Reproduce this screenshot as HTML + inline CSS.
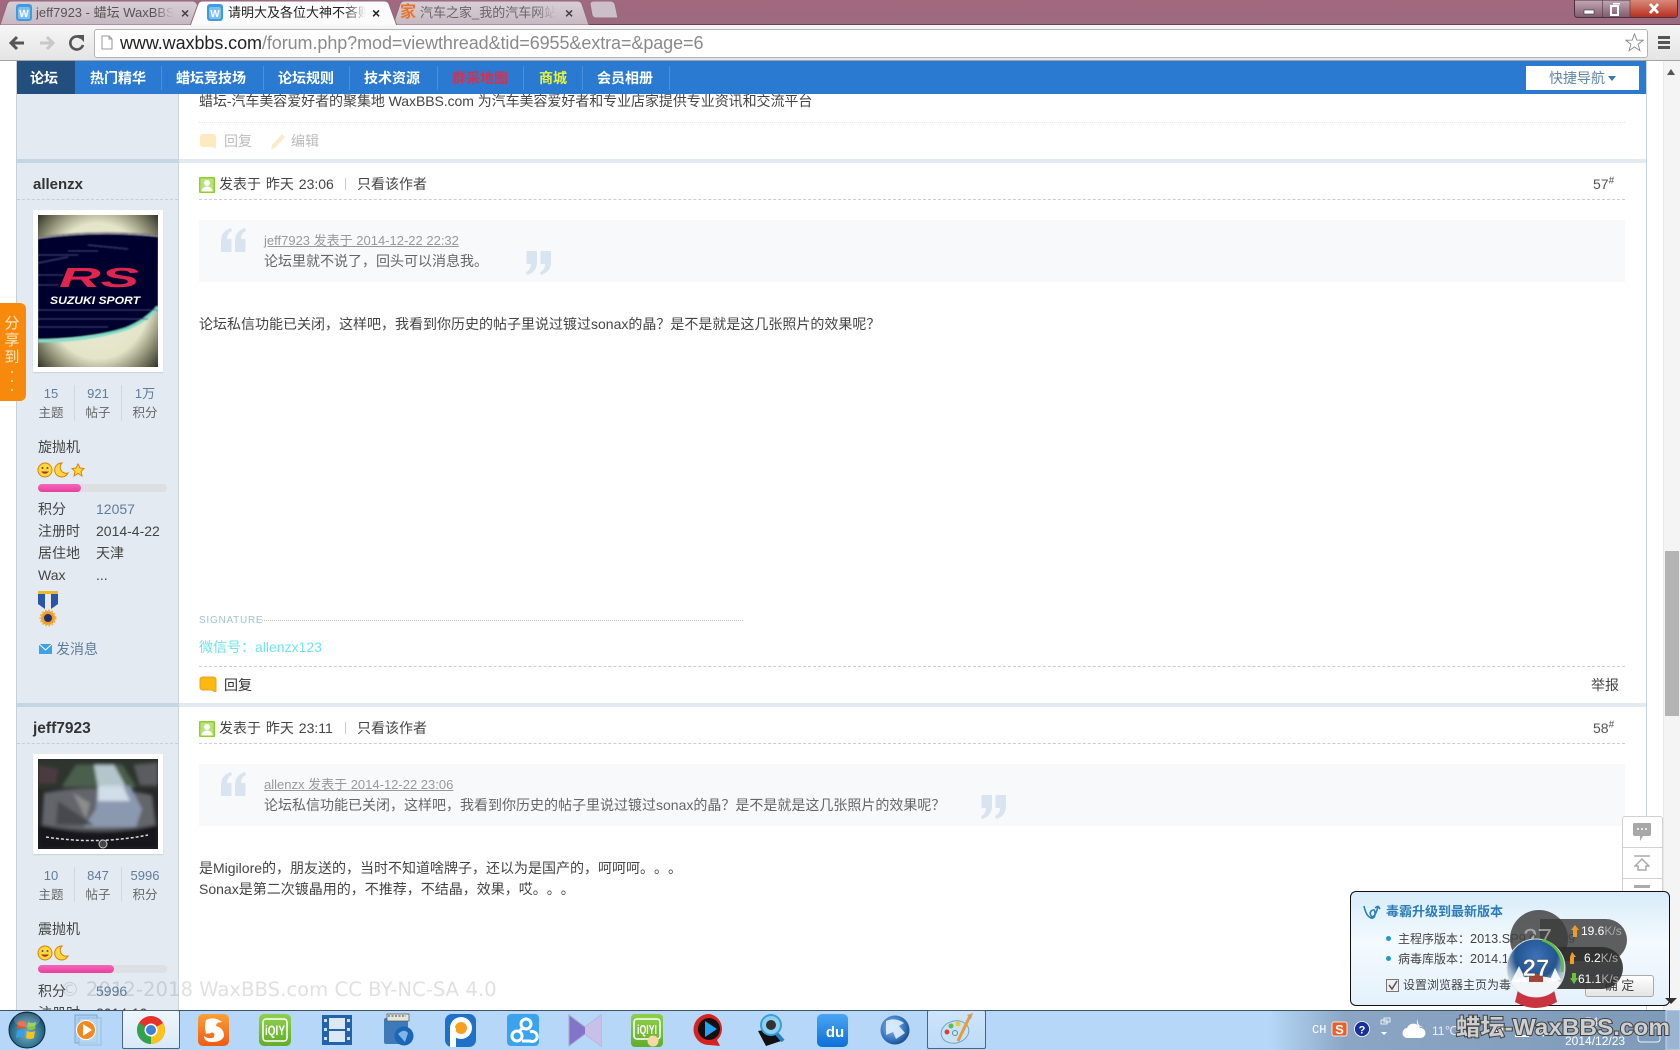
<!DOCTYPE html>
<html lang="zh"><head><meta charset="utf-8"><title>WaxBBS</title>
<style>
html,body{margin:0;padding:0;width:1680px;height:1050px;overflow:hidden;background:#fff}
body{position:relative;font-family:"Liberation Sans","Noto Sans CJK SC",sans-serif;font-size:14px;color:#444;text-spacing-trim:space-all}
.a{position:absolute}
.t{position:absolute;white-space:nowrap;line-height:20px;height:20px}
.nav{position:absolute;top:67px;line-height:22px;font-size:14px;font-weight:bold;color:#fff;white-space:nowrap}
.ns{position:absolute;top:66px;height:24px;width:1px;background:#4a90dc}
.dash{position:absolute;height:0;border-top:1px dashed #cdcdcd}
.c{position:absolute;text-align:center;white-space:nowrap;line-height:20px;height:20px;color:#666}
.c.n{color:#5f7d9c;font-size:13px}
.sv{position:absolute;width:1px;background:#cfd9e2}
.tab{position:absolute;white-space:nowrap;overflow:hidden;font-size:13px;line-height:20px;height:20px;top:3px;-webkit-mask-image:linear-gradient(90deg,#000 85%,transparent);mask-image:linear-gradient(90deg,#000 85%,transparent)}
.tx{position:absolute;top:4px;font-size:14px;line-height:18px;color:#444;font-weight:bold}
</style></head><body>

<svg width="0" height="0" style="position:absolute"><defs>
<path id="qo" d="M1 24V13Q1 3 11 0L12 3Q7 5 7 11H11.500V24ZM15 24V13Q15 3 25 0L26 3Q21 5 21 11H25.500V24Z"/>
<g id="rep"><path d="M4 1H14Q17 1 17 4V15Q17 16 15.500 15.500L13 14H4Q1 14 1 11V4Q1 1 4 1Z"/></g>
</defs></svg>

<!-- page -->
<div class="a" style="left:17px;top:61px;width:161px;height:950px;background:#e3eaf1;border-right:1px solid #c9d6e2"></div>
<div class="a" style="left:16px;top:61px;width:1px;height:950px;background:#c6d0da"></div>
<div class="a" style="left:1646px;top:61px;width:1px;height:950px;background:#c8d2dc"></div>
<div class="a" style="left:17px;top:159px;width:161px;height:4px;background:#c5d6e3"></div>
<div class="a" style="left:179px;top:159px;width:1467px;height:4px;background:#e3eaf1"></div>
<div class="a" style="left:17px;top:703px;width:161px;height:4px;background:#c5d6e3"></div>
<div class="a" style="left:179px;top:703px;width:1467px;height:4px;background:#e3eaf1"></div>

<!-- scrollbar -->
<div class="a" style="left:1663px;top:61px;width:17px;height:950px;background:#f4f4f4;border-left:1px solid #e8e8e8"></div>
<div class="a" style="left:1665px;top:551px;width:14px;height:165px;background:#b4b4b4"></div>
<svg class="a" style="left:1666px;top:68px" width="10" height="8"><path d="M5 1L9 7H1Z" fill="#555"/></svg>

<!-- top post remainder -->
<div class="t" style="left:199px;top:91px;color:#444;letter-spacing:-.06px">蜡坛-汽车美容爱好者的聚集地 WaxBBS.com 为汽车美容爱好者和专业店家提供专业资讯和交流平台</div>
<div class="a" style="left:199px;top:122px;width:1426px;border-top:1px dotted #e8e8e8"></div>
<svg class="a" style="left:199px;top:133px;opacity:.3" width="18" height="17" fill="#fbc02d"><use href="#rep"/></svg>
<div class="t" style="left:224px;top:131px;color:#bbb">回复</div>
<svg class="a" style="left:270px;top:133px;opacity:.35" width="16" height="17"><path d="M12 1L15 4L5 15L1 16L2 12Z" fill="#f3c76a"/></svg>
<div class="t" style="left:291px;top:131px;color:#bbb">编辑</div>

<!-- nav -->
<div class="a" style="left:17px;top:61px;width:1629px;height:33px;background:#2a7ad2"></div>
<div class="a" style="left:17px;top:61px;width:58px;height:33px;background:#234f7e"></div>
<div class="nav" style="left:30px">论坛</div>
<div class="nav" style="left:90px">热门精华</div><div class="ns" style="left:161px"></div>
<div class="nav" style="left:176px">蜡坛竞技场</div><div class="ns" style="left:263px"></div>
<div class="nav" style="left:278px">论坛规则</div><div class="ns" style="left:349px"></div>
<div class="nav" style="left:364px">技术资源</div><div class="ns" style="left:437px"></div>
<div class="nav" style="left:452px;color:#d8304a">群采地图</div><div class="ns" style="left:523px"></div>
<div class="nav" style="left:539px;color:#e6f53a">商城</div><div class="ns" style="left:582px"></div>
<div class="nav" style="left:597px">会员相册</div><div class="ns" style="left:669px"></div>
<div class="a" style="left:1526px;top:66px;width:113px;height:24px;background:#fff"></div>
<div class="t" style="left:1549px;top:68px;color:#5e86a8">快捷导航</div>
<svg class="a" style="left:1608px;top:76px" width="8" height="6"><path d="M0 0H8L4 5Z" fill="#3e76a8"/></svg>

<!-- post 1 sidebar -->
<div class="t" style="left:33px;top:175px;font-weight:bold;font-size:15px;color:#333">allenzx</div>
<div class="dash" style="left:17px;top:199px;width:161px"></div>
<div class="a" style="left:33px;top:210px;width:130px;height:162px;background:#fff;box-shadow:0 1px 1px #c8d0d8"></div>
<svg class="a" style="left:38px;top:215px" width="120" height="152" viewBox="0 0 120 152">
<defs>
<radialGradient id="av1" cx=".5" cy=".5" r=".72"><stop offset="0" stop-color="#f0efdc"/><stop offset=".62" stop-color="#e4e4c8"/><stop offset=".8" stop-color="#8c8c72"/><stop offset="1" stop-color="#2a2a20"/></radialGradient>
<filter id="bl1"><feGaussianBlur stdDeviation=".8"/></filter>
</defs>
<rect width="120" height="152" fill="url(#av1)"/>
<g filter="url(#bl1)">
<path d="M0 22Q60 14 120 20V92Q105 108 85 114Q45 124 0 124Z" fill="#06062f"/>
<path d="M0 23Q60 15 120 21" stroke="#fff" stroke-opacity=".7" fill="none"/>
<path d="M0 126Q50 126 88 114Q108 106 120 92" stroke="#7fe0cc" stroke-width="3" fill="none"/>
<g stroke="#44447e" stroke-width=".7" fill="none"><path d="M0 40H40M0 48L30 42M0 60H25M0 70H20M0 95H120M0 104H110M0 112H70M50 30L90 34M30 36L60 36"/></g>
</g>
<text x="61" y="72" text-anchor="middle" font-family="Liberation Sans" font-style="italic" font-weight="bold" font-size="28" fill="#e0264f" textLength="80" lengthAdjust="spacingAndGlyphs">RS</text>
<text x="57" y="89" text-anchor="middle" font-family="Liberation Sans" font-style="italic" font-weight="bold" font-size="11" fill="#fff" textLength="90" lengthAdjust="spacingAndGlyphs">SUZUKI SPORT</text>
</svg>
<div class="c n" style="left:28px;width:46px;top:384px">15</div><div class="c" style="left:28px;width:46px;top:403px;font-size:12.5px">主题</div>
<div class="sv" style="left:74px;top:385px;height:36px"></div>
<div class="c n" style="left:75px;width:46px;top:384px">921</div><div class="c" style="left:75px;width:46px;top:403px;font-size:12.5px">帖子</div>
<div class="sv" style="left:121px;top:385px;height:36px"></div>
<div class="c n" style="left:122px;width:46px;top:384px">1万</div><div class="c" style="left:122px;width:46px;top:403px;font-size:12.5px">积分</div>
<div class="t" style="left:38px;top:437px">旋抛机</div>
<svg class="a" style="left:37px;top:461px" width="50" height="18" viewBox="0 0 50 18">
<circle cx="8" cy="9" r="7" fill="#ffd93b" stroke="#d9800f"/><circle cx="5.5" cy="7" r="1" fill="#553"/><circle cx="10.5" cy="7" r="1" fill="#553"/><path d="M4 10.5Q8 15 12 10.5Z" fill="#a33"/>
<path d="M25 2A7 7 0 1 0 31 12A6 6 0 0 1 25 2Z" fill="#ffd93b" stroke="#d9800f"/>
<path d="M41 3L43 7L47 7.5L44 10.5L45 15L41 12.5L37 15L38 10.5L35 7.5L39 7Z" fill="#ffd93b" stroke="#d9800f"/>
</svg>
<div class="a" style="left:38px;top:484px;width:129px;height:8px;background:#dcdfe3;border-radius:4px"></div>
<div class="a" style="left:38px;top:484px;width:43px;height:8px;background:linear-gradient(#f468bc,#e83f9b);border-radius:4px"></div>
<div class="t" style="left:38px;top:499px">积分</div><div class="t" style="left:96px;top:499px;color:#5f7d9c">12057</div>
<div class="t" style="left:38px;top:521px">注册时</div><div class="t" style="left:96px;top:521px">2014-4-22</div>
<div class="t" style="left:38px;top:543px">居住地</div><div class="t" style="left:96px;top:543px">天津</div>
<div class="t" style="left:38px;top:565px">Wax</div><div class="t" style="left:96px;top:565px">...</div>
<svg class="a" style="left:38px;top:591px" width="20" height="37" viewBox="0 0 20 37">
<rect width="20" height="3" fill="#e8b830"/><path d="M0 3H20V13L13 18H7L0 13Z" fill="#2b55a8"/><rect x="7" y="3" width="6" height="15" fill="#e8e8e8"/>
<circle cx="10" cy="27" r="7" fill="#f29a1f" stroke="#f0b040" stroke-width="3" stroke-dasharray="1.500 1.500"/><circle cx="10" cy="27" r="4" fill="#1d2f7a"/>
</svg>
<svg class="a" style="left:39px;top:644px" width="13" height="10" viewBox="0 0 13 10"><rect width="13" height="10" fill="#3fa2e6"/><path d="M0 0L6.5 6L13 0" stroke="#fff" fill="none"/></svg>
<div class="t" style="left:56px;top:639px;color:#5f7d9c">发消息</div>

<!-- post 1 main -->
<svg class="a" style="left:199px;top:177px" width="16" height="16"><use href="#uic"/></svg>
<div class="t" style="left:219px;top:174px;word-spacing:1px">发表于 昨天 23:06</div>
<div class="a" style="left:345px;top:178px;width:1px;height:12px;background:#ccc"></div>
<div class="t" style="left:357px;top:174px">只看该作者</div>
<div class="t" style="left:1593px;top:174px;color:#555">57<sup style="font-size:10px;line-height:0">#</sup></div>
<div class="dash" style="left:199px;top:199px;width:1426px"></div>
<div class="a" style="left:199px;top:220px;width:1426px;height:62px;background:#f7f9fa"></div>
<svg class="a" style="left:220px;top:228px" width="26" height="24" fill="#d8e5f0"><use href="#qo"/></svg>
<div class="t" style="left:264px;top:231px;color:#999;text-decoration:underline;font-size:13px">jeff7923 发表于 2014-12-22 22:32</div>
<div class="t" style="left:264px;top:251px;color:#666">论坛里就不说了，回头可以消息我。</div>
<svg class="a" style="left:526px;top:251px;transform:rotate(180deg)" width="26" height="24" fill="#d8e5f0"><use href="#qo"/></svg>
<div class="t" style="left:199px;top:314px">论坛私信功能已关闭，这样吧，我看到你历史的帖子里说过镀过sonax的晶？是不是就是这几张照片的效果呢？</div>
<div class="t" style="left:199px;top:611px;font-size:10px;color:#9cc4cc;letter-spacing:.75px">SIGNATURE</div>
<div class="a" style="left:262px;top:620px;width:481px;border-top:1px dotted #c4c4c4"></div>
<div class="t" style="left:199px;top:637px;color:#6fe3ea">微信号：allenzx123</div>
<div class="dash" style="left:199px;top:666px;width:1426px"></div>
<svg class="a" style="left:199px;top:676px" width="18" height="17" fill="#fbb80f" stroke="#e8a12c"><use href="#rep"/></svg>
<div class="t" style="left:224px;top:675px;color:#333">回复</div>
<div class="t" style="left:1591px;top:675px;color:#444">举报</div>

<!-- post 2 sidebar -->
<div class="t" style="left:33px;top:719px;font-weight:bold;font-size:15.5px;color:#333">jeff7923</div>
<div class="dash" style="left:17px;top:743px;width:161px"></div>
<div class="a" style="left:33px;top:754px;width:130px;height:100px;background:#fff;box-shadow:0 1px 1px #c8d0d8"></div>
<svg class="a" style="left:38px;top:759px" width="120" height="90" viewBox="0 0 120 90">
<defs>
<filter id="bl2"><feGaussianBlur stdDeviation="1.500"/></filter>
<clipPath id="cp2"><rect width="120" height="90"/></clipPath>
</defs>
<rect width="120" height="90" fill="#26282a"/>
<g filter="url(#bl2)" clip-path="url(#cp2)">
<path d="M0 0H120V30H0Z" fill="#2f342e"/>
<path d="M0 6L20 10L18 24H0Z" fill="#4b3a40"/><path d="M96 6L120 4V26H102Z" fill="#5a5c60"/>
<path d="M24 28L38 6H84L98 28Z" fill="#4c5f4e"/><path d="M56 6H76L88 28H60Z" fill="#b4c6cc"/>
<path d="M6 34Q60 24 114 36L118 66Q60 78 4 66Z" fill="#62656b"/>
<path d="M60 27H92L104 50L98 68H46L58 50Z" fill="#8a99b0"/>
<path d="M60 27H85L92 42H60Z" fill="#d0dce8"/>
<path d="M20 42L56 66H18Z" fill="#46494f"/><path d="M35 34L52 44L48 60Z" fill="#8a8c8e"/>
<path d="M0 66Q60 82 120 66V90H0Z" fill="#17181a"/>
</g>
<path d="M8 78Q60 86 110 76" stroke="#d8d8d8" stroke-width="1.500" fill="none" stroke-dasharray="3 2"/>
<circle cx="65" cy="85" r="4" fill="#444" stroke="#ccc"/>
</svg>
<div class="c n" style="left:28px;width:46px;top:866px">10</div><div class="c" style="left:28px;width:46px;top:885px;font-size:12.5px">主题</div>
<div class="sv" style="left:74px;top:867px;height:35px"></div>
<div class="c n" style="left:75px;width:46px;top:866px">847</div><div class="c" style="left:75px;width:46px;top:885px;font-size:12.5px">帖子</div>
<div class="sv" style="left:121px;top:867px;height:35px"></div>
<div class="c n" style="left:122px;width:46px;top:866px">5996</div><div class="c" style="left:122px;width:46px;top:885px;font-size:12.5px">积分</div>
<div class="t" style="left:38px;top:919px">震抛机</div>
<svg class="a" style="left:37px;top:944px" width="34" height="18" viewBox="0 0 34 18">
<circle cx="8" cy="9" r="7" fill="#ffd93b" stroke="#d9800f"/><circle cx="5.5" cy="7" r="1" fill="#553"/><circle cx="10.5" cy="7" r="1" fill="#553"/><path d="M4 10.5Q8 15 12 10.5Z" fill="#a33"/>
<path d="M25 2A7 7 0 1 0 31 12A6 6 0 0 1 25 2Z" fill="#ffd93b" stroke="#d9800f"/>
</svg>
<div class="a" style="left:38px;top:965px;width:129px;height:8px;background:#dcdfe3;border-radius:4px"></div>
<div class="a" style="left:38px;top:965px;width:76px;height:8px;background:linear-gradient(#f468bc,#e83f9b);border-radius:4px"></div>
<div class="t" style="left:38px;top:981px">积分</div><div class="t" style="left:96px;top:981px;color:#5f7d9c">5996</div>
<div class="t" style="left:38px;top:1003px">注册时</div><div class="t" style="left:96px;top:1003px">2014-10</div>

<!-- post 2 main -->
<svg class="a" style="left:199px;top:721px" width="16" height="16" viewBox="0 0 16 16">
<g id="uic"><rect width="16" height="16" rx="1" fill="#8fcf2e"/><rect x="1.500" y="1.500" width="13" height="13" fill="#b9e27a"/><circle cx="8" cy="6" r="3" fill="#fff"/><path d="M2.500 14.500Q3 9.500 8 9.500T13.500 14.500Z" fill="#fff"/></g></svg>
<div class="t" style="left:219px;top:718px;word-spacing:1px">发表于 昨天 23:11</div>
<div class="a" style="left:345px;top:722px;width:1px;height:12px;background:#ccc"></div>
<div class="t" style="left:357px;top:718px">只看该作者</div>
<div class="t" style="left:1593px;top:718px;color:#555">58<sup style="font-size:10px;line-height:0">#</sup></div>
<div class="dash" style="left:199px;top:743px;width:1426px"></div>
<div class="a" style="left:199px;top:764px;width:1426px;height:62px;background:#f7f9fa"></div>
<svg class="a" style="left:220px;top:772px" width="26" height="24" fill="#d8e5f0"><use href="#qo"/></svg>
<div class="t" style="left:264px;top:775px;color:#999;text-decoration:underline;font-size:13px">allenzx 发表于 2014-12-22 23:06</div>
<div class="t" style="left:264px;top:795px;color:#666">论坛私信功能已关闭，这样吧，我看到你历史的帖子里说过镀过sonax的晶？是不是就是这几张照片的效果呢？</div>
<svg class="a" style="left:981px;top:795px;transform:rotate(180deg)" width="26" height="24" fill="#d8e5f0"><use href="#qo"/></svg>
<div class="t" style="left:199px;top:858px">是Migilore的，朋友送的，当时不知道啥牌子，还以为是国产的，呵呵呵。。。</div>
<div class="t" style="left:199px;top:879px">Sonax是第二次镀晶用的，不推荐，不结晶，效果，哎。。。</div>

<!-- share -->
<div class="a" style="left:0;top:303px;width:26px;height:98px;background:#f78a0c;border-radius:0 6px 6px 0"></div>
<div class="a" style="left:3px;top:315px;width:18px;font-size:15px;line-height:17px;color:#ffe9cc;text-align:center">分<br>享<br>到</div>
<div class="a" style="left:11px;top:371px;width:2px;height:2px;background:#ffd9a8;box-shadow:0 9px 0 #ffd9a8,0 18px 0 #ffd9a8"></div>

<!-- float tools -->
<div class="a" style="left:1622px;top:816px;width:39px;height:100px;background:#fff;border:1px solid #d0d0d0;border-radius:3px 3px 0 0"></div>
<div class="a" style="left:1622px;top:847px;width:40px;height:1px;background:#d0d0d0"></div>
<div class="a" style="left:1622px;top:878px;width:40px;height:1px;background:#d0d0d0"></div>
<svg class="a" style="left:1632px;top:822px" width="20" height="20" viewBox="0 0 20 20"><path d="M2 1H18Q19 1 19 2V12Q19 14 17 14H11L8 19V14H3Q1 14 1 12V2Q1 1 2 1Z" fill="#a8a8a8"/><circle cx="6" cy="7" r="1" fill="#fff"/><circle cx="10" cy="7" r="1" fill="#fff"/><circle cx="14" cy="7" r="1" fill="#fff"/></svg>
<svg class="a" style="left:1634px;top:855px" width="16" height="16" viewBox="0 0 16 16"><path d="M0 1H16" stroke="#aaa" stroke-width="1.5"/><path d="M8 4L15 11H12V15H4V11H1Z" fill="none" stroke="#aaa" stroke-width="1.5"/></svg>
<div class="a" style="left:1634px;top:885px;width:16px;height:3px;background:#aaa"></div>

<!-- watermark -->
<div class="t" style="left:60px;top:977px;height:26px;line-height:26px;font-family:'DejaVu Sans',sans-serif;font-size:19.65px;color:rgba(70,70,70,.17);z-index:3">© 2012-2018 WaxBBS.com CC BY-NC-SA 4.0</div>

<!-- tabs + toolbar -->
<div class="a" style="left:0;top:0;width:1680px;height:25px;background:linear-gradient(#a2687e,#9c6a80)"></div>
<div class="a" style="left:0;top:24px;width:1680px;height:1px;background:#6c4154"></div>
<svg class="a" style="left:0;top:1px" width="630" height="24" viewBox="0 0 630 24">
<defs><linearGradient id="ti" x1="0" y1="0" x2="0" y2="1"><stop offset="0" stop-color="#d8cfd6"/><stop offset="1" stop-color="#c7b8c2"/></linearGradient></defs>
<path d="M0 24L7 3Q8 0 12 0H192Q196 0 197 3L205 24Z" fill="url(#ti)" stroke="#8e6a7c"/>
<path d="M393 24L400 3Q401 0 405 0H577Q581 0 582 3L589 24Z" fill="url(#ti)" stroke="#8e6a7c"/>
<path d="M590 3Q590 0 594 0H610Q614 0 615 3L618 17H596Q593 17 592 14Z" fill="#cdbfc9" stroke="#8e6a7c"/>
<path d="M190 25L198 3Q199 0 203 0H384Q388 0 389 3L397 25Z" fill="#fbfbfb" stroke="#8e6a7c"/>
</svg>
<svg class="a" style="left:16px;top:4px" width="16" height="17"><use href="#fav"/></svg>
<svg class="a" style="left:207px;top:4px" width="16" height="17" viewBox="0 0 16 17"><g id="fav"><rect width="16" height="17" rx="3" fill="#3d9be0"/><rect x="2" y="3" width="12" height="12" rx="2" fill="#7fc0ee"/><text x="8" y="13" text-anchor="middle" font-size="10" font-weight="bold" fill="#fff" font-family="Liberation Sans">W</text></g></svg>
<div class="a" style="left:400px;top:2px;font-size:16px;line-height:22px;font-weight:bold;color:#e8752a">家</div>
<div class="tab" style="left:36px;width:138px;color:#555">jeff7923 - 蜡坛 WaxBBS.</div>
<div class="tab" style="left:228px;width:138px;color:#222">请明大及各位大神不吝赐教</div>
<div class="tab" style="left:420px;width:136px;color:#666">汽车之家_我的汽车网站，</div>
<div class="tx" style="left:181px">×</div><div class="tx" style="left:372px;color:#222">×</div><div class="tx" style="left:565px">×</div>

<div class="a" style="left:0;top:25px;width:1680px;height:36px;background:linear-gradient(#f6f6f6,#e4e4e4)"></div>
<div class="a" style="left:0;top:60px;width:1680px;height:1px;background:#a4a4a4"></div>
<div class="a" style="left:94px;top:29px;width:1552px;height:27px;background:#fff;border:1px solid #b4b4b4;border-radius:3px;box-sizing:content-box"></div>
<svg class="a" style="left:8px;top:33px" width="80" height="20" viewBox="0 0 80 20">
<path d="M16 10H4M9 4L3 10L9 16" stroke="#555" stroke-width="3" fill="none"/>
<path d="M32 10H44M39 4L45 10L39 16" stroke="#c8c8c8" stroke-width="3" fill="none"/>
<path d="M73 5A6.5 6.5 0 1 0 75 12" stroke="#555" stroke-width="2.6" fill="none"/><path d="M69 2H76V9Z" fill="#555"/>
</svg>
<svg class="a" style="left:101px;top:35px" width="12" height="15" viewBox="0 0 12 15"><path d="M1 1H8L11 4V14H1Z" fill="#fff" stroke="#999"/><path d="M8 1V4H11" fill="none" stroke="#999"/></svg>
<div class="t" style="left:120px;top:32px;height:22px;line-height:22px;font-size:18px;color:#8a8a8a;letter-spacing:-.08px"><span style="color:#222">www.waxbbs.com</span>/forum.php?mod=viewthread&amp;tid=6955&amp;extra=&amp;page=6</div>
<svg class="a" style="left:1625px;top:33px" width="19" height="19" viewBox="0 0 21 21"><path d="M10.5 1L13 7.8L20 8L14.5 12.4L16.5 19.5L10.5 15.4L4.5 19.5L6.5 12.4L1 8L8 7.8Z" fill="#fff" stroke="#888"/></svg>
<div class="a" style="left:1658px;top:36px;width:12px;height:3px;background:#555;box-shadow:0 5px 0 #555,0 10px 0 #555"></div>

<!-- window buttons -->
<svg class="a" style="left:1574px;top:0" width="104" height="18" viewBox="0 0 104 18">
<defs><linearGradient id="cl" x1="0" y1="0" x2="0" y2="1"><stop offset="0" stop-color="#d98a7a"/><stop offset="1" stop-color="#b83020"/></linearGradient>
<linearGradient id="wb" x1="0" y1="0" x2="0" y2="1"><stop offset="0" stop-color="#c3a9b5"/><stop offset="1" stop-color="#7f5a6e"/></linearGradient></defs>
<path d="M.5 0V14Q.5 17.5 4 17.5H100Q103.5 17.5 103.5 14V0Z" fill="url(#wb)" stroke="#4a3340"/>
<path d="M56 0H103V14Q103 17 100 17H56Z" fill="url(#cl)"/><path d="M28.500 0V17M56 0V17" stroke="#4a3340" stroke-opacity=".6"/>
<rect x="10" y="10" width="10" height="4" fill="#fff" stroke="#333" stroke-width=".6"/>
<rect x="37" y="6" width="7" height="9" fill="none" stroke="#fff" stroke-width="2"/><rect x="39" y="3" width="7" height="1.500" fill="#fff"/>
<path d="M76 4L84 13M84 4L76 13" stroke="#fff" stroke-width="2.800"/>
</svg>

<!-- taskbar -->
<div class="a" style="left:0;top:1010px;width:1680px;height:40px;background:linear-gradient(90deg,#b6d7f8 0,#b6d7f8 1270px,#8aa6c4 1345px,#7e9ab9 1680px);z-index:4"></div>
<div class="a" style="left:0;top:1010px;width:1680px;height:1px;background:#3e5268;z-index:4"></div>
<div class="a" style="left:122px;top:1010px;width:58px;height:39px;background:linear-gradient(#eef6fd,#d8e9fa);border:1px solid #4f6478;border-radius:2px;box-sizing:border-box;z-index:4"></div>
<div class="a" style="left:927px;top:1010px;width:59px;height:39px;background:linear-gradient(#cfe5fa,#bcdaf8);border:1px solid #4f6478;border-radius:2px;box-sizing:border-box;z-index:4"></div>
<svg class="a" style="left:0;top:1010px;z-index:5" width="1680" height="40" viewBox="0 0 1680 40">
<defs>
<radialGradient id="orb" cx=".5" cy=".6" r=".6"><stop offset="0" stop-color="#6fb0c8"/><stop offset=".7" stop-color="#2c6d8a"/><stop offset="1" stop-color="#0f3a55"/></radialGradient>
<linearGradient id="bl" x1="0" y1="0" x2="0" y2="1"><stop offset="0" stop-color="#4aa6f4"/><stop offset="1" stop-color="#0d6fd8"/></linearGradient>
<linearGradient id="or" x1="0" y1="0" x2="0" y2="1"><stop offset="0" stop-color="#fca038"/><stop offset="1" stop-color="#ef5a10"/></linearGradient>
<linearGradient id="gr" x1="0" y1="0" x2="0" y2="1"><stop offset="0" stop-color="#8fd04a"/><stop offset="1" stop-color="#63ad2c"/></linearGradient>
<radialGradient id="glo" cx=".4" cy=".4" r=".7"><stop offset="0" stop-color="#8ec0ee"/><stop offset=".7" stop-color="#2c6ab5"/><stop offset="1" stop-color="#1a3d75"/></radialGradient>
</defs>
<!-- start -->
<circle cx="27" cy="20" r="18" fill="url(#orb)" stroke="#0c2a40"/>
<path d="M18 12Q22 10 26 12L25 19Q21 17 17 19Z" fill="#e8542a"/><path d="M28 12Q32 14 36 12L35 19Q31 21 27 19Z" fill="#8cc63f"/><path d="M17 21Q21 19 25 21L24 28Q20 26 16 28Z" fill="#38a0e0"/><path d="M27 21Q31 23 35 21L34 28Q30 30 26 28Z" fill="#f7c21e"/>
<ellipse cx="27" cy="10" rx="13" ry="7" fill="#fff" opacity=".18"/>
<!-- media player -->
<rect x="75" y="5" width="22" height="28" fill="#a8cdee" stroke="#6c9cc8" opacity=".8"/><rect x="79" y="8" width="22" height="27" fill="#bcd9f2" stroke="#8cb2d6" opacity=".7"/>
<circle cx="86" cy="20" r="9.500" fill="#ef8a22" stroke="#fff"/><path d="M83 14L92 20L83 26Z" fill="#fff"/>
<!-- chrome -->
<circle cx="151" cy="20" r="14" fill="#e5332a"/>
<path d="M151 20L163.100 13A14 14 0 0 1 151 34Z" fill="#fbc31c"/><path d="M151 20L151 34A14 14 0 0 1 138.900 13Z" fill="#33a24c"/>
<circle cx="151" cy="20" r="6.500" fill="#fff"/><circle cx="151" cy="20" r="5" fill="#3f80d8"/>
<!-- UC -->
<rect x="198" y="4" width="31" height="32" rx="5" fill="url(#or)"/>
<path d="M206 10Q214 6 222 12Q216 12 216 16Q224 18 224 26Q222 32 212 32Q204 32 204 26Q210 30 214 27Q210 22 206 24Q204 16 206 10Z" fill="#fff"/><circle cx="212" cy="25" r="2.500" fill="#f0752a"/>
<!-- iqiyi -->
<rect x="259" y="4" width="32" height="32" rx="5" fill="url(#gr)"/><rect x="263" y="9" width="24" height="22" rx="3" fill="none" stroke="#fff" stroke-width="1.500"/>
<text x="275" y="25" text-anchor="middle" font-size="14" font-weight="bold" fill="#fff" font-family="Liberation Sans" textLength="20" lengthAdjust="spacingAndGlyphs">iQIY</text>
<!-- film -->
<rect x="322" y="5" width="30" height="30" fill="#2463ac"/><rect x="329" y="8" width="16" height="11" fill="#dce9f5"/><rect x="329" y="21" width="16" height="11" fill="#dce9f5"/>
<g fill="#cfe0f0"><rect x="324" y="9" width="3" height="3"/><rect x="324" y="18" width="3" height="3"/><rect x="324" y="27" width="3" height="3"/><rect x="347" y="9" width="3" height="3"/><rect x="347" y="18" width="3" height="3"/><rect x="347" y="27" width="3" height="3"/></g>
<!-- folder globe -->
<rect x="384" y="8" width="24" height="26" rx="2" fill="#3f7ab8"/><rect x="387" y="4" width="22" height="7" fill="#e5e5dc" stroke="#555" stroke-width=".7"/><path d="M388 6h18" stroke="#444" stroke-dasharray="2 1.500"/>
<circle cx="404" cy="26" r="9.500" fill="#1c66b8"/><path d="M398 24Q404 18 408 23L405 32Z" fill="#7fb8e8"/>
<!-- pplive -->
<rect x="445" y="4" width="31" height="33" rx="7" fill="#1e70c8"/><circle cx="461" cy="18" r="11" fill="#fff"/><circle cx="461" cy="18" r="6" fill="#f6a021"/><path d="M450 18V37H456V18Z" fill="#fff"/>
<!-- baidu cloud -->
<rect x="507" y="4" width="32" height="32" rx="4" fill="#3ba2ee"/><circle cx="517" cy="26" r="5" fill="none" stroke="#fff" stroke-width="3"/><circle cx="526" cy="14" r="5" fill="none" stroke="#fff" stroke-width="3"/><path d="M530 22a5 5 0 1 1 0 9h-8M519 22L523 17" stroke="#fff" stroke-width="3" fill="none"/>
<!-- vs -->
<path d="M569 5L585 17L601 5V36L585 24L569 36Z" fill="#8474c8" stroke="#a8a8d0"/><path d="M585 17L601 5V36L585 24Z" fill="#c8c0e8"/>
<!-- iqiyi 2 -->
<rect x="631" y="4" width="32" height="33" rx="4" fill="url(#gr)"/><rect x="634" y="9" width="26" height="20" rx="3" fill="none" stroke="#fff" stroke-width="1.500"/>
<text x="647" y="24" text-anchor="middle" font-size="13" font-weight="bold" fill="#fff" font-family="Liberation Sans" textLength="20" lengthAdjust="spacingAndGlyphs">iQIYI</text><circle cx="653" cy="31" r="5.500" fill="#f5d8a8"/>
<!-- q player -->
<path d="M709 4A15 15 0 1 0 709 35L720 36L717 30A15 15 0 0 0 709 4Z" fill="#d8221e"/><circle cx="709" cy="19" r="11" fill="#111"/><path d="M705 11L717 19L705 27Z" fill="#2aa0f2"/>
<!-- magnifier -->
<path d="M758 21L766 36L784 30L774 18Z" fill="#111"/><circle cx="771" cy="15" r="10" fill="#8ed0f0" stroke="#3a9fd8" stroke-width="2"/><circle cx="771" cy="15" r="5" fill="#333"/><path d="M777 24L783 31" stroke="#2a80c8" stroke-width="4"/>
<!-- du -->
<rect x="817" y="4" width="31" height="33" rx="5" fill="url(#bl)"/><text x="835" y="27" text-anchor="middle" font-size="15" font-weight="bold" fill="#fff" font-family="Liberation Sans">du</text>
<!-- blue circle -->
<circle cx="895" cy="20" r="14.500" fill="url(#glo)"/><path d="M886 11Q895 7 904 13L899 16L905 23L896 29L893 22L886 25Z" fill="#e0effb" opacity=".9"/>
<!-- paint -->
<ellipse cx="955" cy="22" rx="14" ry="11" fill="#c9e3f5" stroke="#6ea4c8" transform="rotate(-15 955 22)"/>
<circle cx="947" cy="22" r="2.500" fill="#d8413a"/><circle cx="951" cy="16" r="2.500" fill="#5ebc4c"/><circle cx="958" cy="14" r="2.500" fill="#f1cb28"/><circle cx="955" cy="23" r="2.500" fill="none" stroke="#4a8fc0"/>
<path d="M970 6L958 31" stroke="#e89a3a" stroke-width="3"/><path d="M967 5L973 3L971 9Z" fill="#c8a070"/>
<!-- tray -->
<text x="1312" y="23" font-family="Liberation Mono" font-size="12" fill="#fff">CH</text>
<rect x="1332" y="12" width="15" height="14" rx="2" fill="#e8602a" stroke="#fff" stroke-width=".8"/><text x="1339.500" y="24" text-anchor="middle" font-size="13" font-weight="bold" fill="#fff" font-family="Liberation Sans">S</text>
<circle cx="1362" cy="19" r="7.500" fill="#1a2f9a" stroke="#fff" stroke-width=".8"/><text x="1362" y="23.500" text-anchor="middle" font-size="11" font-weight="bold" fill="#fff" font-family="Liberation Sans">?</text>
<rect x="1381" y="10" width="6" height="4" fill="none" stroke="#fff" stroke-width=".8"/><rect x="1384" y="8" width="6" height="4" fill="none" stroke="#fff" stroke-width=".8"/><path d="M1381 22H1387L1384 25Z" fill="#fff"/>
<path d="M1408 28A5 5 0 0 1 1407 18A7 7 0 0 1 1420 18A5 5 0 0 1 1421 28Z" fill="#fff"/><path d="M1418 9A6 6 0 0 0 1423 17A5 5 0 0 1 1418 9Z" fill="#fff"/>
<text x="1432" y="25" font-size="12" fill="#eef" font-family="Liberation Sans">11℃</text>
<rect x="1495" y="16" width="8" height="8" fill="#fff"/><path d="M1515 26h14M1538 20l6 6" stroke="#fff" stroke-width="2"/>
<text x="1585" y="16" font-size="12" fill="#eef" font-family="Liberation Sans">54</text>
<text x="1565" y="35" font-size="12" fill="#fff" font-family="Liberation Sans">2014/12/23</text>
<rect x="1638" y="18" width="22" height="14" rx="3" fill="none" stroke="#eef"/>
<rect x="1666" y="0" width="14" height="40" fill="#9ab5d2" stroke="#c8d6e6"/>
<text x="1456" y="25" font-family="Liberation Sans,Noto Sans CJK SC,sans-serif" font-size="23" font-weight="bold" fill="#cfcfcf" stroke="#444" stroke-width="2" paint-order="stroke" textLength="214" lengthAdjust="spacingAndGlyphs">蜡坛-WaxBBS.com</text>
</svg>

<!-- popup -->
<div class="a" style="left:1350px;top:891px;width:318px;height:113px;border:1.500px solid #111;border-radius:6px;background:linear-gradient(#d8ecfa 0,#f4fafe 45%,#e4f1fb 100%);z-index:6"></div>
<svg class="a" style="left:1363px;top:904px;z-index:7" width="18" height="16" viewBox="0 0 18 16"><path d="M1 2Q3 12 8 14Q12 15 12 9Q12 4 8 7Q6 10 9 13Q13 12 15 2M15 2L12 4M15 2L17 5" fill="none" stroke="#2d7fb8" stroke-width="1.600"/></svg>
<div class="t" style="left:1386px;top:902px;color:#2b7cb8;font-weight:bold;font-size:13px;z-index:7">毒霸升级到最新版本</div>
<div class="a" style="left:1386px;top:936px;width:5px;height:5px;border-radius:3px;background:#1f9bc8;z-index:7"></div>
<div class="t" style="left:1398px;top:929px;color:#444;font-size:12px;z-index:9">主程序版本：<span style="font-size:12.7px">2013.SP9.0.71909</span></div>
<div class="a" style="left:1386px;top:956px;width:5px;height:5px;border-radius:3px;background:#1f9bc8;z-index:7"></div>
<div class="t" style="left:1398px;top:949px;color:#444;font-size:12px;z-index:7">病毒库版本：<span style="font-size:12.7px">2014.1</span></div>
<div class="a" style="left:1386px;top:979px;width:11px;height:11px;border:1px solid #777;background:#eee;z-index:7"></div>
<svg class="a" style="left:1387px;top:980px;z-index:7" width="12" height="12"><path d="M2 5L5 9L10 1" stroke="#555" stroke-width="1.500" fill="none"/></svg>
<div class="t" style="left:1403px;top:975px;color:#444;font-size:12px;z-index:7">设置浏览器主页为毒</div>
<div class="a" style="left:1585px;top:975px;width:67px;height:20px;border:1px solid #aaa;border-radius:3px;background:linear-gradient(#fff,#e4e4e4);text-align:center;line-height:20px;font-size:13px;z-index:7">确 定</div>

<!-- speed widget -->
<div class="a" style="left:1510px;top:910px;width:58px;height:58px;border-radius:50%;background:rgba(60,60,60,.82);z-index:8"></div>
<div class="a" style="left:1540px;top:919px;width:87px;height:42px;border-radius:0 21px 21px 0;background:rgba(60,60,60,.82);z-index:8"></div>
<div class="a" style="left:1528px;top:947px;width:95px;height:42px;border-radius:21px;background:rgba(45,45,45,.9);z-index:8"></div>
<div class="t" style="left:1523px;top:928px;font-size:26px;color:rgba(255,255,255,.45);z-index:8">27</div>
<svg class="a" style="left:1570px;top:924px;z-index:9" width="10" height="62" viewBox="0 0 10 62"><path d="M5 1L9 6H7V13H3V6H1Z" fill="#f09a28"/><path d="M2 28L6 33H4V40H0V33Z" fill="#f09a28" transform="translate(0 0)"/><path d="M0 49H4V54H6L2 60L-2 54H0Z" fill="#6cc040" transform="translate(2 0)"/></svg>
<div class="t" style="left:1581px;top:921px;font-size:12px;color:#fff;z-index:9">19.6<span style="color:#aaa">K/s</span></div>
<div class="t" style="left:1584px;top:948px;font-size:12px;color:#fff;z-index:9">6.2<span style="color:#aaa">K/s</span></div>
<div class="t" style="left:1578px;top:969px;font-size:12px;color:#fff;z-index:9">61.1<span style="color:#aaa">K/s</span></div>
<svg class="a" style="left:1505px;top:936px;z-index:10" width="80" height="76" viewBox="0 0 80 76">
<defs><radialGradient id="gl" cx=".5" cy=".3" r=".72"><stop offset="0" stop-color="#3d72b8"/><stop offset=".5" stop-color="#23548f"/><stop offset=".72" stop-color="#a8bccc"/><stop offset="1" stop-color="#f4f8fb"/></radialGradient>
<clipPath id="glc"><circle cx="31" cy="32" r="29"/></clipPath></defs>
<path d="M13 54Q31 62 49 54L52 66Q31 78 10 66Z" fill="#c9343e"/>
<circle cx="31" cy="32" r="29" fill="url(#gl)" stroke="#d8dee4"/>
<g clip-path="url(#glc)"><ellipse cx="31" cy="58" rx="32" ry="18" fill="#f2f5f8"/></g>
<path d="M37 4A28 28 0 0 1 57 36" stroke="#5bbf3a" stroke-width="2.500" fill="none"/>
<path d="M6 46L14 30L22 46Z" fill="#fff" opacity=".9"/><path d="M44 46L50 32L56 44Z" fill="#fff" opacity=".9"/>
<path d="M24 46H38V38H24Z" fill="#a34538"/>
<text x="31" y="40" text-anchor="middle" font-family="Liberation Sans" font-size="24" font-weight="bold" fill="#fff" stroke="#555" stroke-width=".5">27</text>
</svg>
<svg class="a" style="left:1664px;top:997px;z-index:6" width="14" height="8"><path d="M1 1H13L7 7Z" fill="#333"/></svg>
</body></html>
